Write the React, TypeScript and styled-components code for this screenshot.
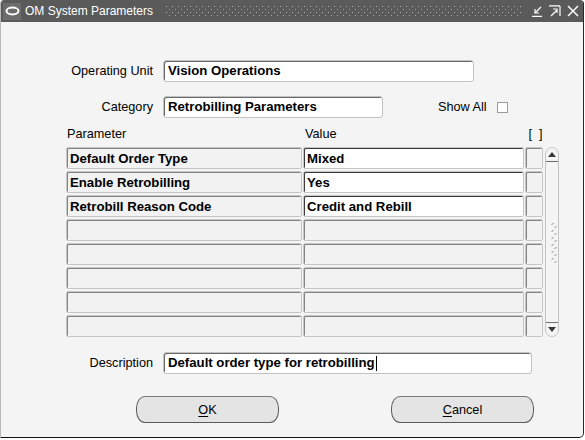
import React from 'react';
import styled, { createGlobalStyle } from 'styled-components';

const GlobalStyle = createGlobalStyle`
    html, body {
        margin: 0;
        padding: 0;
        background: #ffffff;
    }
    body {
        font-family: "Liberation Sans", Arial, sans-serif;
        color: #000;
    }
`;

const Window = styled.div`
    width: 584px;
    height: 438px;
    box-sizing: border-box;
    background: #f4f4f4;
    border-left: 1px solid #b8b8b8;
    border-right: 1px solid #2a2a2a;
    border-bottom: 1px solid #111;
    border-radius: 4px 4px 5px 0;
    display: flex;
    flex-direction: column;
    overflow: hidden;
`;

const TitleBar = styled.div`
    height: 22px;
    flex: none;
    background: #5a5a5a;
    display: flex;
    align-items: center;
    padding: 0 4px 0 2px;
    gap: 4px;
`;

const TitleIcon = styled.div`
    width: 18px;
    height: 17px;
    background: #6c6c6c;
    display: flex;
    align-items: center;
    justify-content: center;
`;

const TitleText = styled.span`
    color: #ffffff;
    font-size: 12px;
    white-space: nowrap;
`;

const Dots = styled.div`
    flex: 1;
    height: 12px;
    margin: 0 6px 0 8px;
    background-image: radial-gradient(circle at 1.5px 1.5px, #b8b8b8 0.6px, transparent 0.9px),
        radial-gradient(circle at 4.5px 4.5px, #a4a4a4 0.6px, transparent 0.9px);
    background-size: 6px 6px;
`;

const TitleButtons = styled.div`
    display: flex;
    align-items: center;
    gap: 6px;
`;

const Body = styled.div`
    display: flex;
    flex-direction: column;
`;

const FormRow = styled.div<{ $top: number }>`
    display: grid;
    grid-template-columns: 152px auto auto auto;
    justify-content: start;
    align-items: center;
    column-gap: 10px;
    margin-top: ${({ $top }) => $top}px;
`;

const Label = styled.span`
    font-size: 12.7px;
    text-align: right;
    white-space: nowrap;
`;

const Field = styled.div<{ $width: number }>`
    width: ${({ $width }) => $width}px;
    height: 22px;
    box-sizing: border-box;
    background: #ffffff;
    border: 1px solid #c2c2c2;
    border-radius: 3px;
    box-shadow: inset 1px 1px 0 #6a6a6a;
    padding: 0 4px;
    font-size: 13.2px;
    font-weight: bold;
    line-height: 20px;
    white-space: nowrap;
    display: flex;
    align-items: center;
`;

const Caret = styled.span`
    display: inline-block;
    width: 1px;
    height: 15px;
    background: #000;
    margin-left: 1px;
`;

const ShowAll = styled.span`
    font-size: 12.7px;
    margin-left: 45px;
`;

const Check = styled.span`
    width: 11px;
    height: 11px;
    box-sizing: border-box;
    background: #fff;
    border: 1px solid #9c9c9c;
`;

const GridBlock = styled.div`
    margin-top: 8px;
    padding-left: 65px;
    display: flex;
    flex-direction: column;
`;

const HeaderRow = styled.div`
    display: grid;
    grid-template-columns: 237px 221px 18px;
    column-gap: 1px;
    height: 16px;
    align-items: center;
    margin-bottom: 5px;
`;

const HeaderCell = styled.span<{ $center?: boolean }>`
    font-size: 12.7px;
    padding-left: 1px;
    white-space: pre;
    text-align: ${({ $center }) => ($center ? 'center' : 'left')};
`;

const GridArea = styled.div`
    display: flex;
    gap: 2px;
`;

const Rows = styled.div`
    display: grid;
    grid-template-columns: 236px 221px 18px;
    grid-auto-rows: 22px;
    column-gap: 1px;
    row-gap: 2px;
`;

const Cell = styled.div<{ $filled?: boolean }>`
    box-sizing: border-box;
    background: ${({ $filled }) => ($filled ? '#ffffff' : '#f2f2f2')};
    border: 1px solid #c6c6c6;
    border-radius: 2px;
    box-shadow: inset 1px 1px 0
        ${({ $filled }) => ($filled ? '#3c3c3c' : '#858585')};
    padding: 0 3px;
    font-size: 13.2px;
    font-weight: bold;
    display: flex;
    align-items: center;
    white-space: nowrap;
    overflow: hidden;
`;

const Scrollbar = styled.div`
    width: 14px;
    box-sizing: border-box;
    border: 1px solid #c4c4c4;
    border-radius: 7px;
    display: flex;
    flex-direction: column;
    align-items: stretch;
`;

const ScrollEnd = styled.div<{ $down?: boolean }>`
    height: 13px;
    display: flex;
    align-items: center;
    justify-content: center;
    border-${({ $down }) => ($down ? 'top' : 'bottom')}: 1px solid #6e6e6e;
`;

const ScrollTrack = styled.div`
    flex: 1;
    display: flex;
    flex-direction: column;
    justify-content: center;
    align-items: flex-end;
    padding-right: 1px;
`;

const DescRow = styled(FormRow)`
    grid-template-columns: 152px auto;
`;

const ButtonRow = styled.div`
    display: flex;
    gap: 112px;
    padding-left: 135px;
    margin-top: 22px;
`;

const Button = styled.button`
    width: 143px;
    height: 27px;
    box-sizing: border-box;
    background: #e4e4e4;
    border: 1px solid #5a5a5a;
    border-top-color: #7a7a7a;
    border-radius: 9px / 12px;
    font-family: "Liberation Sans", Arial, sans-serif;
    font-size: 12.7px;
    color: #000;
    padding: 0;
    u {
        text-decoration: underline;
        text-underline-offset: 2px;
    }
`;

const params = [
    ['Default Order Type', 'Mixed'],
    ['Enable Retrobilling', 'Yes'],
    ['Retrobill Reason Code', 'Credit and Rebill'],
    ['', ''],
    ['', ''],
    ['', ''],
    ['', ''],
    ['', ''],
];

const Grip = () => (
    <svg width="6" height="42" viewBox="0 0 6 42">
        {Array.from({ length: 6 }).map((_, i) => (
            <g key={i} stroke="#8a8a8a" strokeWidth="1">
                <line x1="0.5" y1={i * 7 + 4} x2="2.5" y2={i * 7 + 2} />
                <line x1="3.5" y1={i * 7 + 7} x2="5.5" y2={i * 7 + 5} />
            </g>
        ))}
    </svg>
);

export default function App() {
    return (
        <>
            <GlobalStyle />
            <Window>
                <TitleBar>
                    <TitleIcon>
                        <svg width="15" height="10" viewBox="0 0 15 10">
                            <ellipse cx="7.5" cy="5" rx="6" ry="3.4" fill="none" stroke="#fff" strokeWidth="2" />
                        </svg>
                    </TitleIcon>
                    <TitleText>OM System Parameters</TitleText>
                    <Dots />
                    <TitleButtons>
                        <svg width="11" height="11" viewBox="0 0 11 11" stroke="#fff" strokeWidth="1.2" fill="none">
                            <line x1="9" y1="1" x2="3" y2="7" />
                            <polyline points="3,3 3,7 7,7" />
                            <line x1="0" y1="10.4" x2="10" y2="10.4" />
                        </svg>
                        <svg width="12" height="12" viewBox="0 0 12 12" stroke="#fff" strokeWidth="1.2" fill="none">
                            <line x1="0" y1="0.8" x2="11" y2="0.8" />
                            <line x1="2" y1="11" x2="8" y2="5" />
                            <polyline points="4,4 8,4 8,8" />
                            <line x1="11" y1="1" x2="11" y2="11" />
                        </svg>
                        <svg width="12" height="12" viewBox="0 0 12 12" stroke="#fff" strokeWidth="1.5">
                            <line x1="1" y1="1" x2="11" y2="11" />
                            <line x1="11" y1="1" x2="1" y2="11" />
                        </svg>
                    </TitleButtons>
                </TitleBar>
                <Body>
                    <FormRow $top={38}>
                        <Label>Operating Unit</Label>
                        <Field $width={311}>Vision Operations</Field>
                    </FormRow>
                    <FormRow $top={14}>
                        <Label>Category</Label>
                        <Field $width={220}>Retrobilling Parameters</Field>
                        <ShowAll>Show All</ShowAll>
                        <Check />
                    </FormRow>
                    <GridBlock>
                        <HeaderRow>
                            <HeaderCell>Parameter</HeaderCell>
                            <HeaderCell>Value</HeaderCell>
                            <HeaderCell $center>{'[  ]'}</HeaderCell>
                        </HeaderRow>
                        <GridArea>
                            <Rows>
                                {params.map(([name, value], i) => (
                                    <React.Fragment key={i}>
                                        <Cell>{name}</Cell>
                                        <Cell $filled={value !== ''}>{value}</Cell>
                                        <Cell />
                                    </React.Fragment>
                                ))}
                            </Rows>
                            <Scrollbar>
                                <ScrollEnd>
                                    <svg width="8" height="5" viewBox="0 0 8 5">
                                        <polygon points="0,5 8,5 4,0" fill="#3a3a3a" />
                                    </svg>
                                </ScrollEnd>
                                <ScrollTrack>
                                    <Grip />
                                </ScrollTrack>
                                <ScrollEnd $down>
                                    <svg width="8" height="5" viewBox="0 0 8 5">
                                        <polygon points="0,0 8,0 4,5" fill="#3a3a3a" />
                                    </svg>
                                </ScrollEnd>
                            </Scrollbar>
                        </GridArea>
                    </GridBlock>
                    <DescRow $top={15}>
                        <Label>Description</Label>
                        <Field $width={369}>
                            Default order type for retrobilling
                            <Caret />
                        </Field>
                    </DescRow>
                    <ButtonRow>
                        <Button>
                            <u>O</u>K
                        </Button>
                        <Button>
                            <u>C</u>ancel
                        </Button>
                    </ButtonRow>
                </Body>
            </Window>
        </>
    );
}
